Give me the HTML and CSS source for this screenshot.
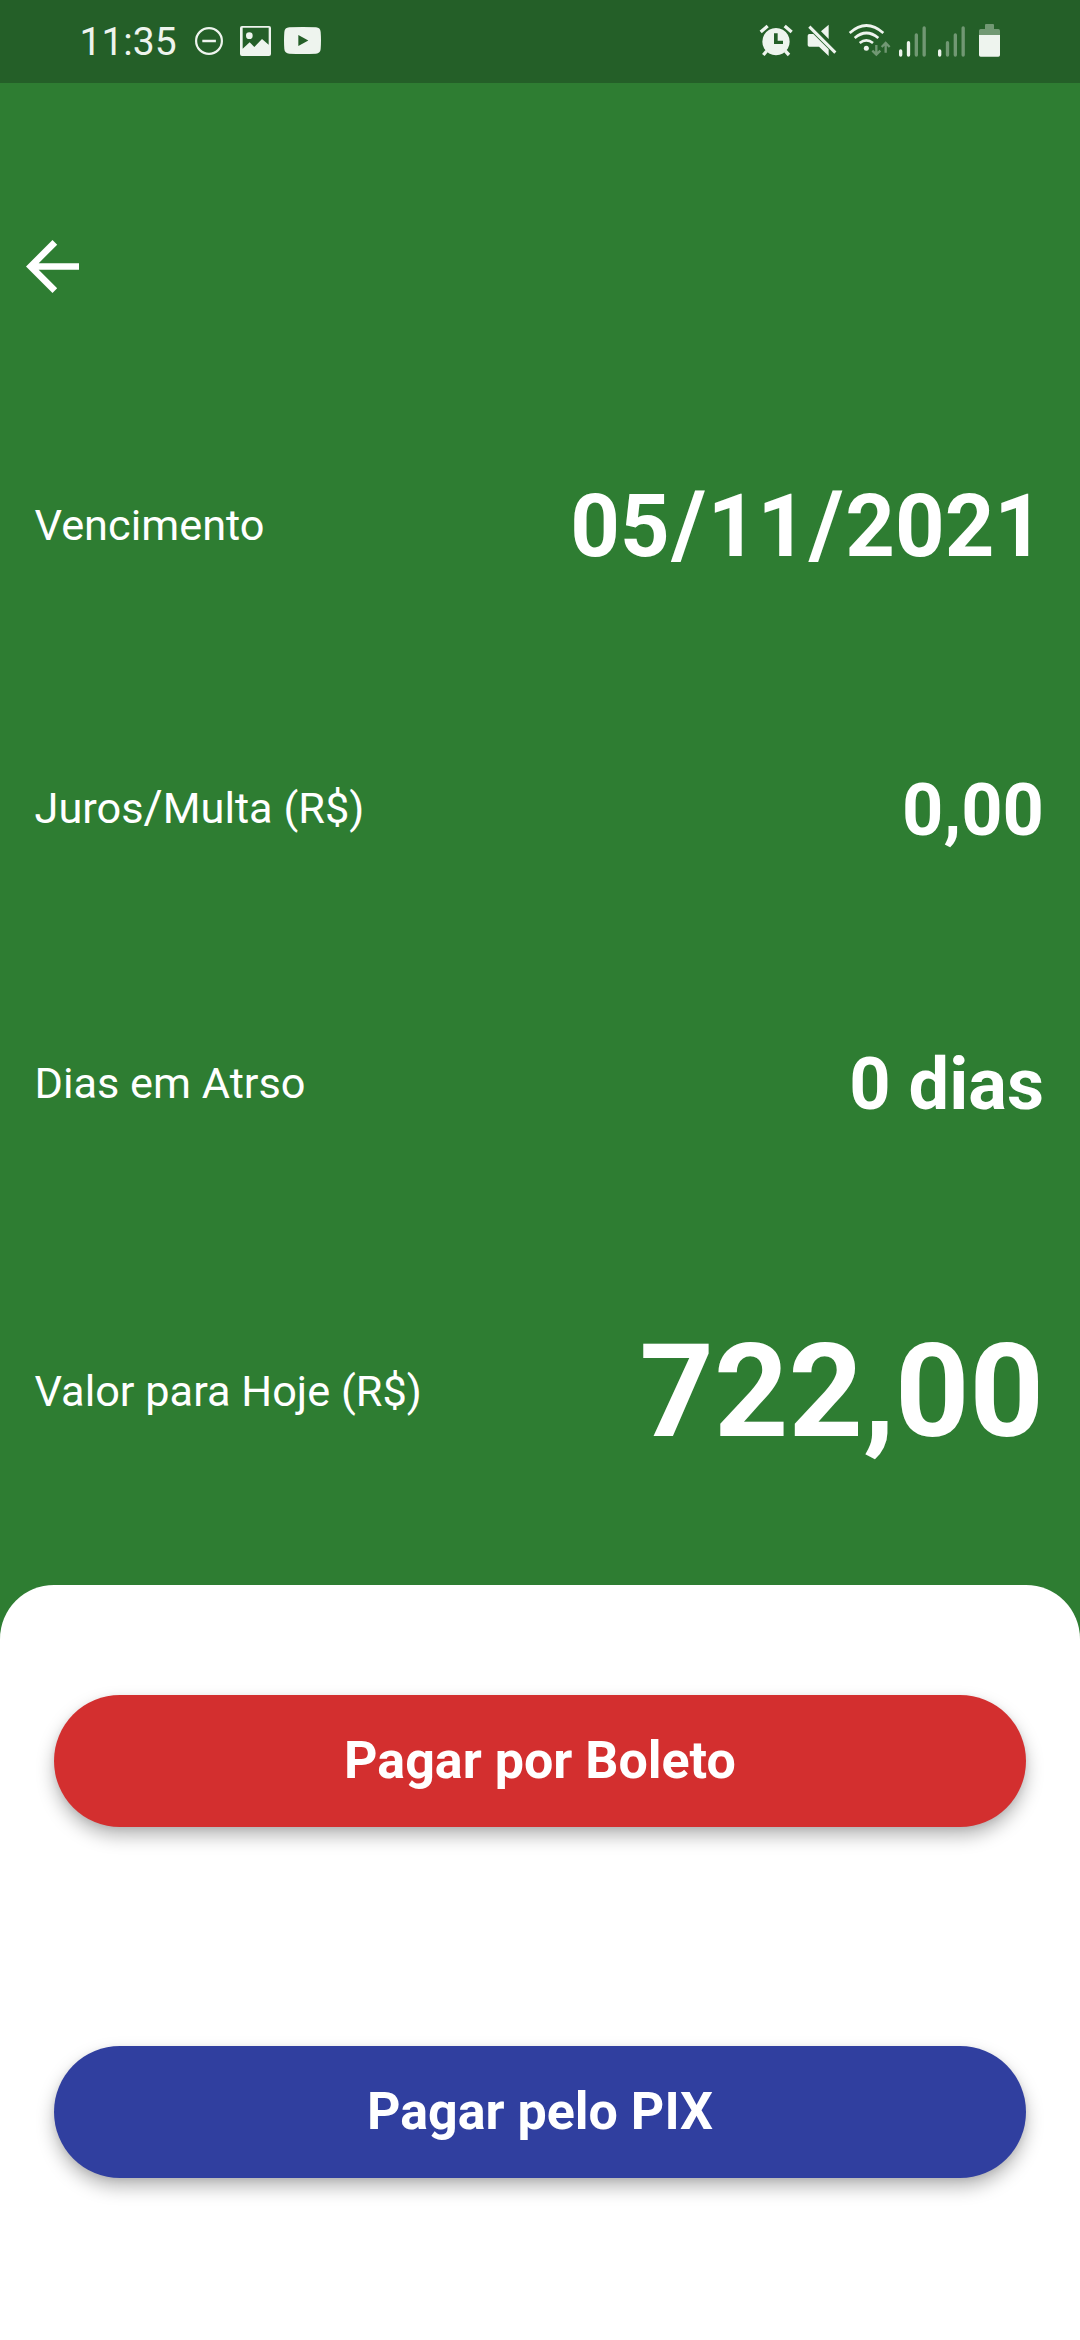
FILE: index.html
```html
<!DOCTYPE html>
<html lang="pt-BR">
<head>
<meta charset="utf-8">
<title>Pagamento</title>
<link rel="stylesheet" href="styles.css">
</head>
<body>
<header class="status">
  <div class="status-left">
    <span class="clock">11:35</span>
    <svg class="ic-dnd" viewBox="0 0 28 28"><circle cx="14" cy="14" r="12.900" fill="none" stroke="currentColor" stroke-width="2.200"/><path d="M7.300 14h13.600" stroke="currentColor" stroke-width="2.500"/></svg>
    <svg class="ic-image" viewBox="540 75 93 90"><path fill="currentColor" fill-rule="evenodd" d="M546 75H627Q633 75 633 81V159Q633 165 627 165H546Q540 165 540 159V81Q540 75 546 75ZM548 80V143L569 124L583 138L606 114L626 131V80Z"/><circle cx="568" cy="104" r="10" fill="currentColor"/></svg>
    <svg class="ic-video" viewBox="672 81 111 81"><path fill="currentColor" fill-rule="evenodd" d="M688 82Q728 80 768 82Q781 83 782 96Q784 121 782 147Q781 160 768 161Q728 163 688 161Q674 160 673 147Q671 121 673 96Q674 83 688 82ZM715 105V138L745 121.500Z"/></svg>
  </div>
  <div class="status-right">
    <svg class="ic-alarm" viewBox="57 72 102 99"><g fill="none" stroke="currentColor" stroke-width="10"><path d="M62 96 83 78M155 96 134 78"/><path d="M80 153 70 165M136 153 147 165"/></g><path fill="currentColor" fill-rule="evenodd" d="M108 84a41 41 0 1 0 .01 0ZM102 100H113V122H129V132H102Z"/></svg>
    <svg class="ic-mute" viewBox="201 72 90 99"><path fill="currentColor" d="M266 74V117L243 94ZM208 102H220L266 148V168L237 140H208Q203 140 203 135V107Q203 102 208 102Z"/><path d="M208 80 286 158" stroke="currentColor" stroke-width="9"/></svg>
    <svg class="ic-wifi" viewBox="324 72 129 99"><g fill="none" stroke="currentColor" stroke-width="8"><path d="M329 99Q379 54 430 99"/><path d="M344 114Q379 84 415 114"/><path d="M359 129Q379 113 399 129"/></g><circle cx="379" cy="145" r="7.500" fill="currentColor"/><g class="dim" fill="none" stroke="currentColor" stroke-width="7"><path d="M409 135V163M397 152 409 164 421 152"/><path d="M437 158V130M425 141 437 129 449 141"/></g></svg>
    <svg class="ic-signal" viewBox="474 72 87 99"><g fill="none" stroke="currentColor" stroke-width="10" stroke-linecap="round"><path d="M482 153V165M505.500 128V165"/><path class="dim" d="M529 105V165M552.500 84V165"/></g></svg>
    <svg class="ic-signal ic-signal-second" viewBox="474 72 87 99"><g fill="none" stroke="currentColor" stroke-width="10" stroke-linecap="round"><path d="M482 153V165"/><path class="dim" d="M505.500 128V165M529 105V165M552.500 84V165"/></g></svg>
    <svg class="ic-battery" viewBox="714 72 69 99"><path class="dim" fill="currentColor" d="M735 75Q735 72 738 72H759Q762 72 762 75V87H775Q780 87 780 92V105H717V92Q717 87 722 87H735Z"/><path fill="currentColor" d="M717 105H780V165Q780 170 775 170H722Q717 170 717 165Z"/></svg>
  </div>
</header>
<main class="details">
  <svg class="back" viewBox="4 4 16 16"><path fill="currentColor" d="M20 11H7.830l5.590-5.590L12 4l-8 8 8 8 1.410-1.410L7.830 13H20z"/></svg>
  <div class="row row-due"><span>Vencimento</span><strong>05<span class="slash">/</span>11<span class="slash">/</span>2021</strong></div>
  <div class="row row-fee"><span>Juros<span class="slash">/</span>Multa (R$)</span><strong>0,00</strong></div>
  <div class="row row-days"><span>Dias em Atrso</span><strong>0 dias</strong></div>
  <div class="row row-total"><span>Valor para Hoje (R$)</span><strong>722,00</strong></div>
</main>
<section class="sheet">
  <button class="pay pay-boleto">Pagar por Boleto</button>
  <button class="pay pay-pix">Pagar pelo PIX</button>
</section>
</body>
</html>
```
FILE: styles.css
```css
* { box-sizing: border-box; }
body { margin: 0; width: 1080px; height: 2340px; display: flex; flex-direction: column; background: #2e7d32; color: #fff; font-family: Roboto, sans-serif; overflow: hidden; }
svg { display: block; flex: none; }

.status { height: 83px; flex: none; background: #245f28; padding: 0 79px 2px 79.5px; display: flex; align-items: center; justify-content: space-between; color: #eef4ee; }
.status-left, .status-right { display: flex; align-items: center; }
.clock { font-size: 39px; line-height: 1; padding-top: 4px; }
.ic-dnd { width: 28px; height: 28px; margin-left: 18px; }
.ic-image { width: 31px; height: 30px; margin-left: 17px; }
.ic-video { width: 37px; height: 27px; margin-left: 13px; }
.dim { opacity: .38; }
.ic-alarm { width: 34px; height: 33px; }
.ic-mute { width: 30px; height: 33px; margin-left: 14px; }
.ic-wifi { width: 43px; height: 33px; margin-left: 11px; }
.ic-signal { width: 29px; height: 33px; margin-left: 7px; }
.ic-signal-second { margin-left: 10px; }
.ic-battery { width: 23px; height: 33px; margin-left: 12px; }

.details { height: 1502px; flex: none; display: flex; flex-direction: column; padding: 157px 36px 0 34.5px; }
.back { width: 53px; height: 53px; margin-left: -8.5px; }
.row { flex: none; display: flex; justify-content: space-between; align-items: center; font-size: 43.3px; line-height: 1; }
.row strong { font-weight: 700; padding-top: 3px; }
.row-due { height: 280px; margin-top: 93px; }
.row-due strong { font-size: 86.6px; }
.slash { font-size: 1.074em; line-height: 0; }
.row-due .slash { padding: 0 1.8px; }
.row-fee { height: 286px; }
.row-fee strong, .row-days strong { font-size: 72.2px; }
.row-fee strong { padding-top: 5px; }
.row-days { height: 264px; }
.row-total { height: 352px; }
.row-total strong { font-size: 129.9px; padding-top: 0; }

.sheet { height: 755px; flex: none; background: #fff; border-radius: 54px 54px 0 0; padding: 110px 54px; display: flex; flex-direction: column; gap: 219.4px; }
.pay { height: 131.6px; flex: none; border: 0; border-radius: 66px; color: #fff; font: 700 52px Roboto, sans-serif; box-shadow: 0 9px 18px rgba(0,0,0,.28), 0 2px 6px rgba(0,0,0,.08); }
.pay-boleto { background: #d32f2f; }
.pay-pix { background: #303f9f; }
```
